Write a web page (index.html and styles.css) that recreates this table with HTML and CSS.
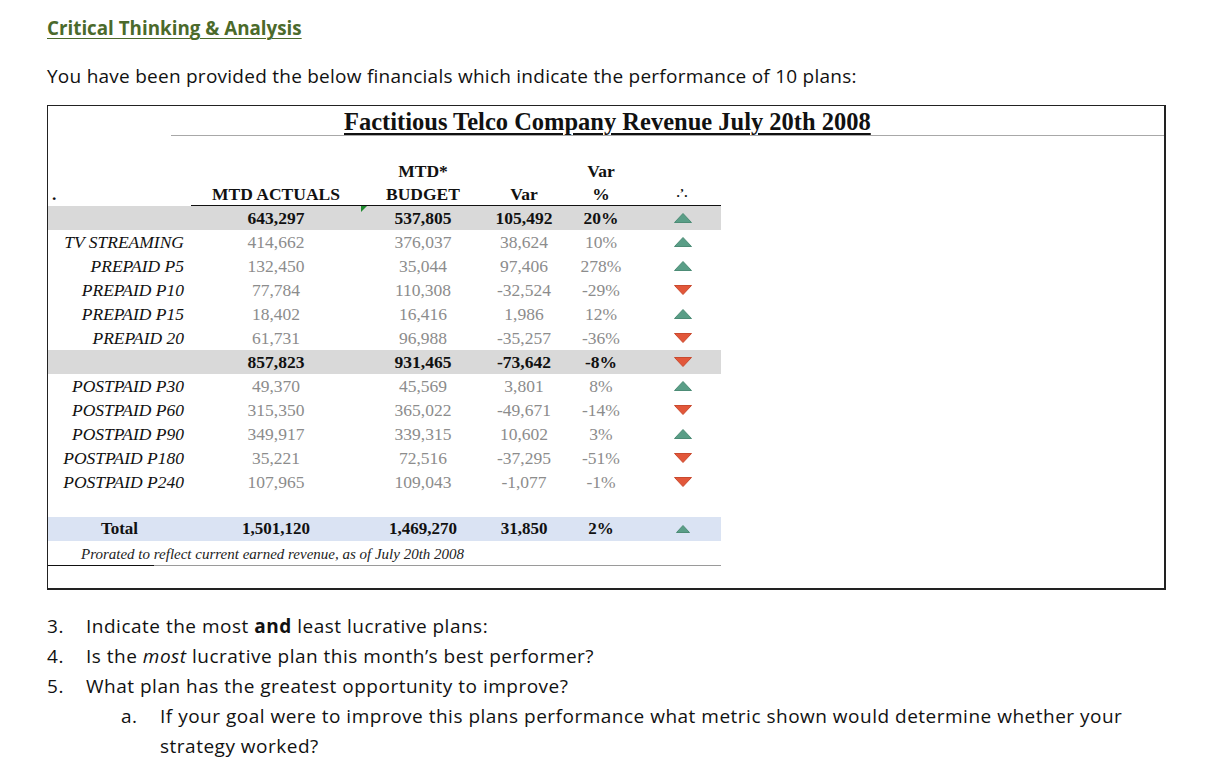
FILE: index.html
```html
<!DOCTYPE html>
<html>
<head>
<meta charset="utf-8">
<title>Critical Thinking &amp; Analysis</title>
<link rel="stylesheet" href="styles.css">
</head>
<body>
<div class="page">
  <h1 class="heading">Critical Thinking &amp; Analysis</h1>
  <p class="intro">You have been provided the below financials which indicate the performance of 10 plans:</p>

  <div class="sheet">
    <div class="title-row"><span class="title">Factitious Telco Company Revenue July 20th 2008</span></div>
    <table class="fin">
      <colgroup>
        <col class="c-label"><col class="c-act"><col class="c-bud"><col class="c-var"><col class="c-pct"><col class="c-arr">
      </colgroup>
      <thead>
        <tr class="h1">
          <th></th><th></th><th>MTD*</th><th></th><th>Var</th><th></th>
        </tr>
        <tr class="h2">
          <th class="dot">.</th><th class="ul">MTD ACTUALS</th><th class="ul">BUDGET</th><th class="ul">Var</th><th class="ul">%</th><th class="ul dots">.&#8217;.</th>
        </tr>
      </thead>
      <tbody>
        <tr class="sub">
          <td></td><td>643,297</td><td class="flag">537,805</td><td>105,492</td><td>20%</td>
          <td class="arr"><svg width="18" height="10" viewBox="0 0 18 10"><polygon class="up" points="0.5,9.5 9,0.5 17.5,9.5"/></svg></td>
        </tr>
        <tr><td class="lbl">TV STREAMING</td><td>414,662</td><td>376,037</td><td>38,624</td><td>10%</td>
          <td class="arr"><svg width="18" height="10" viewBox="0 0 18 10"><polygon class="up" points="0.5,9.5 9,0.5 17.5,9.5"/></svg></td></tr>
        <tr><td class="lbl">PREPAID P5</td><td>132,450</td><td>35,044</td><td>97,406</td><td>278%</td>
          <td class="arr"><svg width="18" height="10" viewBox="0 0 18 10"><polygon class="up" points="0.5,9.5 9,0.5 17.5,9.5"/></svg></td></tr>
        <tr><td class="lbl">PREPAID P10</td><td>77,784</td><td>110,308</td><td>-32,524</td><td>-29%</td>
          <td class="arr"><svg width="18" height="10" viewBox="0 0 18 10"><polygon class="down" points="0.5,0.5 17.5,0.5 9,9.5"/></svg></td></tr>
        <tr><td class="lbl">PREPAID P15</td><td>18,402</td><td>16,416</td><td>1,986</td><td>12%</td>
          <td class="arr"><svg width="18" height="10" viewBox="0 0 18 10"><polygon class="up" points="0.5,9.5 9,0.5 17.5,9.5"/></svg></td></tr>
        <tr><td class="lbl">PREPAID 20</td><td>61,731</td><td>96,988</td><td>-35,257</td><td>-36%</td>
          <td class="arr"><svg width="18" height="10" viewBox="0 0 18 10"><polygon class="down" points="0.5,0.5 17.5,0.5 9,9.5"/></svg></td></tr>
        <tr class="sub">
          <td></td><td>857,823</td><td>931,465</td><td>-73,642</td><td>-8%</td>
          <td class="arr"><svg width="18" height="10" viewBox="0 0 18 10"><polygon class="down" points="0.5,0.5 17.5,0.5 9,9.5"/></svg></td>
        </tr>
        <tr><td class="lbl">POSTPAID P30</td><td>49,370</td><td>45,569</td><td>3,801</td><td>8%</td>
          <td class="arr"><svg width="18" height="10" viewBox="0 0 18 10"><polygon class="up" points="0.5,9.5 9,0.5 17.5,9.5"/></svg></td></tr>
        <tr><td class="lbl">POSTPAID P60</td><td>315,350</td><td>365,022</td><td>-49,671</td><td>-14%</td>
          <td class="arr"><svg width="18" height="10" viewBox="0 0 18 10"><polygon class="down" points="0.5,0.5 17.5,0.5 9,9.5"/></svg></td></tr>
        <tr><td class="lbl">POSTPAID P90</td><td>349,917</td><td>339,315</td><td>10,602</td><td>3%</td>
          <td class="arr"><svg width="18" height="10" viewBox="0 0 18 10"><polygon class="up" points="0.5,9.5 9,0.5 17.5,9.5"/></svg></td></tr>
        <tr><td class="lbl">POSTPAID P180</td><td>35,221</td><td>72,516</td><td>-37,295</td><td>-51%</td>
          <td class="arr"><svg width="18" height="10" viewBox="0 0 18 10"><polygon class="down" points="0.5,0.5 17.5,0.5 9,9.5"/></svg></td></tr>
        <tr><td class="lbl">POSTPAID P240</td><td>107,965</td><td>109,043</td><td>-1,077</td><td>-1%</td>
          <td class="arr"><svg width="18" height="10" viewBox="0 0 18 10"><polygon class="down" points="0.5,0.5 17.5,0.5 9,9.5"/></svg></td></tr>
        <tr class="gap"><td colspan="6"></td></tr>
        <tr class="total">
          <td>Total</td><td>1,501,120</td><td>1,469,270</td><td>31,850</td><td>2%</td>
          <td class="arr"><svg width="14" height="8" viewBox="0 0 14 8"><polygon class="up" points="0.5,7.5 7,0.5 13.5,7.5"/></svg></td>
        </tr>
        <tr class="note"><td colspan="6">Prorated to reflect current earned revenue, as of July 20th 2008</td></tr>
      </tbody>
    </table>
  </div>

  <ol class="questions">
    <li><span class="q-text">Indicate the most <b>and</b> least lucrative plans:</span></li>
    <li><span class="q-text">Is the <i>most</i> lucrative plan this month&#8217;s best performer?</span></li>
    <li><span class="q-text">What plan has the greatest opportunity to improve?
      <ol class="sub-q">
        <li><span class="q-text">If your goal were to improve this plans performance what metric shown would determine whether your strategy worked?</span></li>
      </ol></span>
    </li>
  </ol>
</div>
</body>
</html>
```

FILE: styles.css
```css
html, body {
  margin: 0;
  padding: 0;
  background: #ffffff;
}

.page {
  padding-left: 47px;
  font-family: "Open Sans", Lato, sans-serif;
  color: #111;
}

.heading {
  margin: 16px 0 0 0;
  font-size: 18.8px;
  line-height: 24px;
  font-weight: 700;
  color: #4b6a2b;
  text-decoration: underline;
  text-underline-offset: 3px;
  text-decoration-thickness: 1px;
}

.intro {
  margin: 24px 0 0 0;
  font-size: 19px;
  letter-spacing: 0.25px;
  line-height: 24px;
}

.sheet {
  margin-top: 17px;
  width: 1119px;
  height: 485px;
  border: 1px solid #222;
  border-right-width: 2px;
  border-bottom-width: 2px;
  box-sizing: border-box;
  font-family: "Liberation Serif", "Times New Roman", serif;
}

.title-row {
  margin-left: 123px;
  height: 30px;
  padding-top: 2px;
  padding-left: 173px;
  box-sizing: border-box;
  border-bottom: 1px solid #a8a8a8;
}

.title {
  font-size: 24.5px;
  line-height: 28px;
  font-weight: 700;
  text-decoration: underline;
  text-underline-offset: 3px;
  text-decoration-thickness: 2px;
}

.fin {
  margin-top: 23px;
  border-collapse: collapse;
  table-layout: fixed;
  width: 673px;
  font-size: 17.5px;
}

.c-label { width: 143px; }
.c-act { width: 170px; }
.c-bud { width: 124px; }
.c-var { width: 78px; }
.c-pct { width: 76px; }
.c-arr { width: 82px; }

.fin th, .fin td {
  padding: 0;
  height: 24px;
  line-height: 24px;
  text-align: center;
  white-space: nowrap;
}

.fin th {
  font-weight: 700;
  color: #111;
}

.h2 th { height: 22px; line-height: 22px; vertical-align: top; }

.h2 th.ul { border-bottom: 1.5px solid #111; }

.h2 th.dot {
  text-align: left;
  padding-left: 4px;
}

.h2 th.dots {
  font-size: 13px;
  padding-left: 4px;
  line-height: 20px;
}

.fin td {
  color: #8c8c8c;
}

.fin td.lbl {
  color: #111;
  font-style: italic;
  text-align: right;
  padding-right: 7px;
}

.fin tr.sub td {
  background: #d9d9d9;
  color: #111;
  font-weight: 700;
}

.fin td.flag {
  position: relative;
}

.fin td.flag::before {
  content: "";
  position: absolute;
  left: 0;
  top: 0;
  width: 0;
  height: 0;
  border-top: 6px solid #1f8a2e;
  border-right: 6px solid transparent;
}

.fin td.arr {
  padding-left: 6px;
  line-height: 0;
  vertical-align: middle;
}

.fin td.arr svg { display: inline-block; }

.up { fill: #5a9e87; stroke: #4d8c76; stroke-width: 1; }
.down { fill: #e2573a; stroke: #c94a2f; stroke-width: 1; }

.fin tr.gap td { height: 23px; }

.fin tr.total td {
  background: #dae3f3;
  color: #111;
  font-weight: 700;
  font-size: 17px;
}

.fin tr.note td {
  height: 25px;
  text-align: left;
  padding-left: 33px;
  font-size: 15px;
  font-style: italic;
  color: #222;
  background: linear-gradient(to right, #111 0 106px, #9a9a9a 106px 100%) left bottom / 100% 1px no-repeat;
}

.questions {
  list-style: none;
  counter-reset: q 2;
  margin: 21px 0 0 0;
  padding: 0;
  width: 1088px;
  font-size: 19px;
  letter-spacing: 0.5px;
  line-height: 30px;
}

.questions li {
  display: grid;
  grid-template-columns: 39px 1fr;
}

.questions > li {
  counter-increment: q;
}

.questions > li::before {
  content: counter(q) ".";
}

.sub-q {
  list-style: none;
  counter-reset: sq;
  margin: 0 0 0 35px;
  padding: 0;
}

.sub-q > li {
  counter-increment: sq;
}

.sub-q > li::before {
  content: counter(sq, lower-alpha) ".";
}
```
